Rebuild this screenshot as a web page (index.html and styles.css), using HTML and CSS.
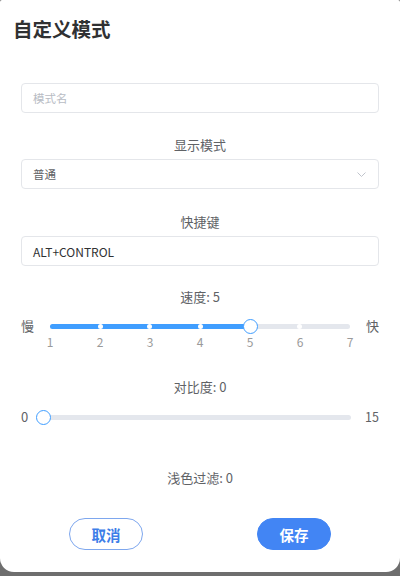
FILE: index.html
```html
<!DOCTYPE html>
<html lang="zh-CN">
<head>
<meta charset="utf-8">
<title>自定义模式</title>
<link rel="stylesheet" href="styles.css">
</head>
<body>
<div class="card">
  <h1 class="title">自定义模式</h1>
  <div class="form">
    <div class="input first"><span class="placeholder">模式名</span></div>

    <div class="label gap22">显示模式</div>
    <div class="input select">
      <span class="value muted">普通</span>
      <svg class="chev" width="9" height="5" viewBox="0 0 9 5"><path d="M0.5 0.5 L4.5 4.5 L8.5 0.5" fill="none" stroke="#c0c4cc" stroke-width="1"/></svg>
    </div>

    <div class="label gap23">快捷键</div>
    <div class="input"><span class="value">ALT+CONTROL</span></div>

    <div class="label gap21">速度: 5</div>
    <div class="slider-row row1">
      <span class="end start-1">慢</span>
      <div class="slider w300">
        <div class="runway">
          <div class="rail"></div>
          <div class="bar" style="width:66.667%"></div>
          <span class="stop" style="left:16.667%"></span>
          <span class="stop" style="left:33.333%"></span>
          <span class="stop" style="left:50%"></span>
          <span class="stop" style="left:83.333%"></span>
          <span class="thumb" style="left:66.667%"></span>
        </div>
        <div class="marks">
          <span style="left:0%">1</span>
          <span style="left:16.667%">2</span>
          <span style="left:33.333%">3</span>
          <span style="left:50%">4</span>
          <span style="left:66.667%">5</span>
          <span style="left:83.333%">6</span>
          <span style="left:100%">7</span>
        </div>
      </div>
      <span class="end last">快</span>
    </div>

    <div class="label gap28">对比度: 0</div>
    <div class="slider-row row2">
      <span class="end start-2">0</span>
      <div class="slider w308">
        <div class="runway">
          <div class="rail"></div>
          <span class="thumb" style="left:0%"></span>
        </div>
      </div>
      <span class="end last num">15</span>
    </div>

    <div class="label gap43">浅色过滤: 0</div>
  </div>
  <div class="actions">
    <button class="btn ghost">取消</button>
    <button class="btn primary">保存</button>
  </div>
</div>
</body>
</html>
```
FILE: styles.css
```css
* { box-sizing: border-box; }
html, body { margin: 0; padding: 0; }
body {
  width: 400px;
  height: 576px;
  background: #6e6e6e;
  font-family: "Noto Sans CJK SC", "Liberation Sans", sans-serif;
  overflow: hidden;
}
.card {
  width: 400px;
  height: 572px;
  background: #ffffff;
  border-radius: 2px 2px 14px 14px;
  padding-top: 19px;
}
.title {
  margin: 0;
  padding: 0 13px;
  font-size: 19.5px;
  line-height: 20px;
  font-weight: 700;
  color: #303133;
}
.form {
  padding: 0 21px;
}
.input {
  height: 30px;
  border: 1px solid #e4e6ea;
  border-radius: 4px;
  padding: 0 11px;
  display: flex;
  align-items: center;
  font-size: 12px;
  color: #303133;
}
.input.first { margin-top: 44px; }
.placeholder { color: #b8bcc4; font-size: 11.5px; }
.value { font-size: 12px; }
.muted { color: #606266; font-size: 11.5px; }
.select { justify-content: space-between; }
.chev { margin-right: 1px; }
.label {
  text-align: center;
  font-size: 13px;
  line-height: 20px;
  color: #606266;
  margin-bottom: 4px;
}
.gap21 { margin-top: 21px; }
.gap22 { margin-top: 22px; }
.gap23 { margin-top: 23px; }
.gap28 { margin-top: 28px; }
.gap43 { margin-top: 43px; }

.slider-row {
  display: flex;
  align-items: flex-start;
}
.row1 { margin-top: 11px; }
.row2 { margin-top: 12px; }
.end {
  font-size: 13px;
  line-height: 16px;
  color: #606266;
}
.start-1 { width: 29px; }
.start-2 { width: 22px; padding-left: 0; }
.last { flex: 1; text-align: right; }
.num { font-size: 12.5px; }
.slider { flex: none; }
.w300 { width: 300px; }
.w308 { width: 308px; }
.runway {
  position: relative;
  height: 16px;
}
.rail {
  position: absolute;
  left: 0;
  right: 0;
  top: 6px;
  height: 5px;
  border-radius: 3px;
  background: #e4e7ed;
}
.bar {
  position: absolute;
  left: 0;
  top: 6px;
  height: 5px;
  border-radius: 3px 0 0 3px;
  background: #409eff;
}
.stop {
  position: absolute;
  top: 6px;
  width: 5px;
  height: 5px;
  margin-left: -2.5px;
  border-radius: 50%;
  background: #ffffff;
}
.thumb {
  position: absolute;
  top: 1px;
  width: 15px;
  height: 15px;
  margin-left: -7.5px;
  border-radius: 50%;
  border: 1.5px solid #409eff;
  background: #ffffff;
}
.marks {
  position: relative;
  height: 14px;
  margin-top: 1px;
}
.marks span {
  position: absolute;
  top: 0;
  transform: translateX(-50%);
  font-size: 12px;
  line-height: 14px;
  color: #9a9a9a;
}
.actions {
  margin-top: 30px;
  padding: 0 12px;
  display: flex;
  justify-content: space-around;
}
.btn {
  width: 74px;
  height: 32px;
  border-radius: 16px;
  font-family: "Noto Sans CJK SC", sans-serif;
  font-size: 14.5px;
  font-weight: 700;
  padding: 0;
  cursor: pointer;
}
.ghost {
  background: #ffffff;
  border: 1px solid #7ea7ee;
  color: #3d7ee8;
}
.primary {
  background: #4285f4;
  border: 1px solid #4285f4;
  color: #ffffff;
}
```
